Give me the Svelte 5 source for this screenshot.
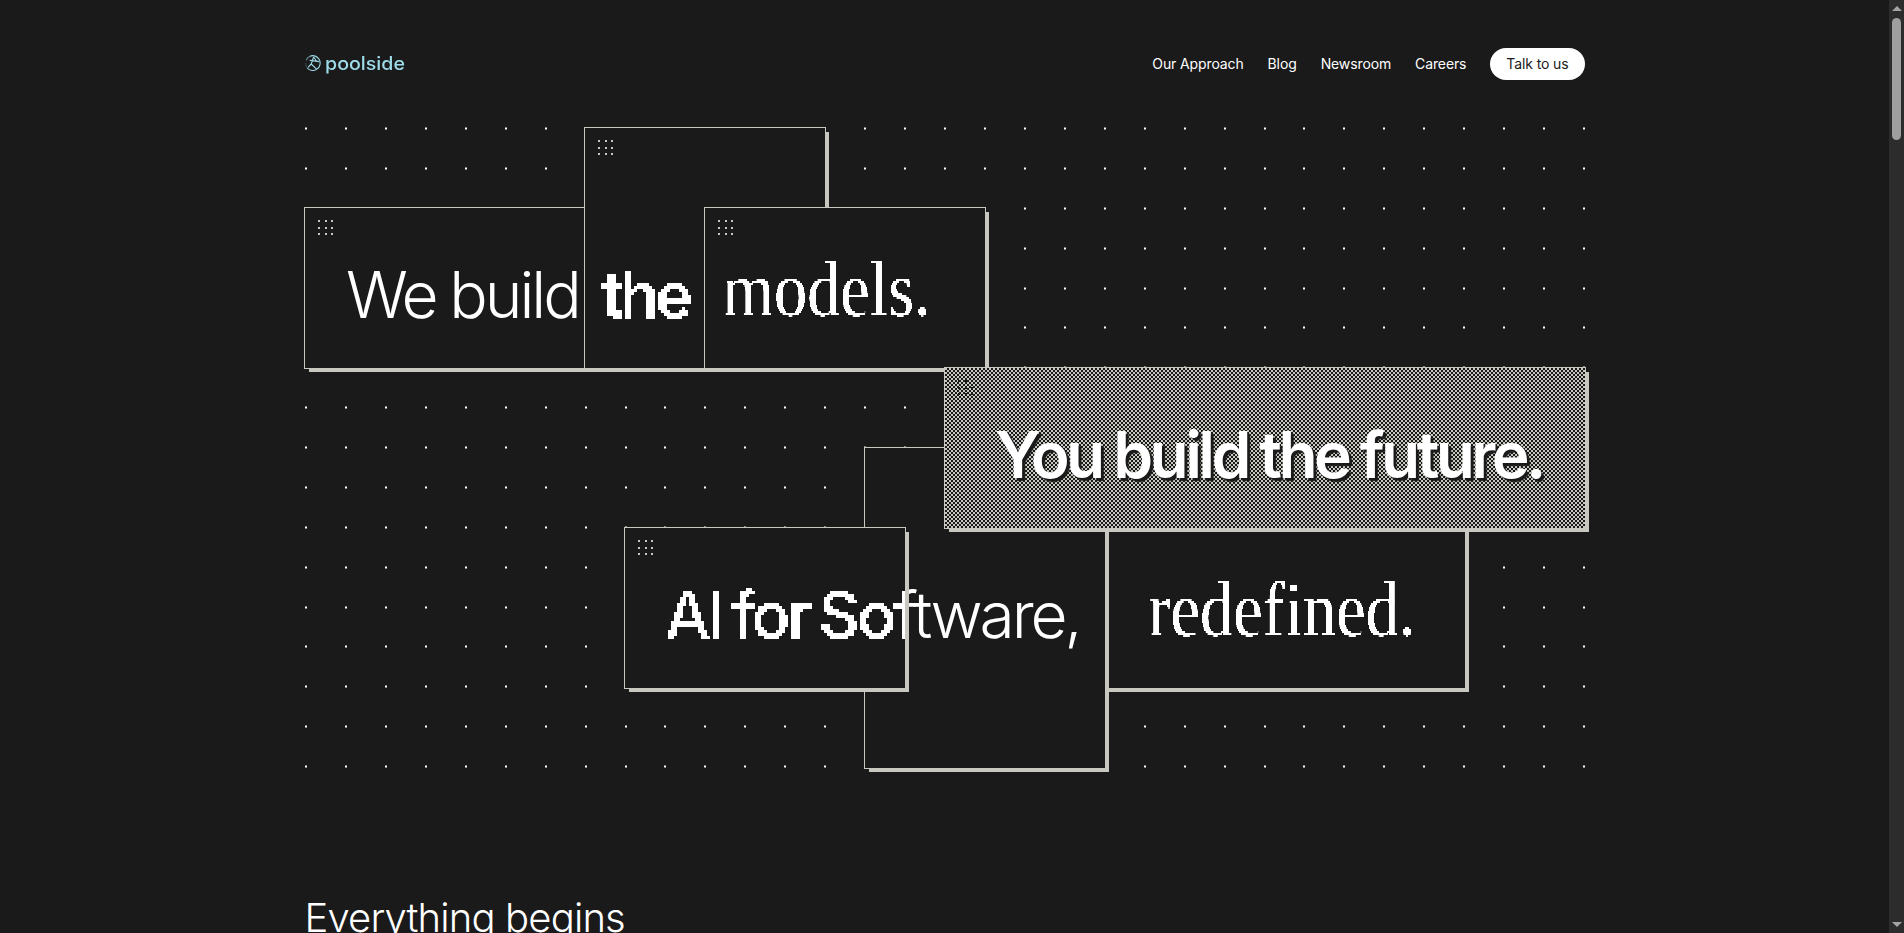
<script>
  const navLinks = ['Our Approach', 'Blog', 'Newsroom', 'Careers'];
  const dots = Array.from({ length: 33 * 17 });
  const grip = Array.from({ length: 9 });
</script>

{#snippet gripIcon()}
  <div class="grip">
    {#each grip as _}<i></i>{/each}
  </div>
{/snippet}

<svg class="defs" width="0" height="0" aria-hidden="true">
  <filter id="pixel3" x="0" y="0" width="100%" height="100%" color-interpolation-filters="sRGB">
    <feFlood x="1" y="1" width="1" height="1" flood-color="#fff" />
    <feComposite width="3" height="3" />
    <feTile result="grid" />
    <feComposite in="SourceGraphic" in2="grid" operator="in" />
    <feComponentTransfer>
      <feFuncA type="discrete" tableValues="0 1" />
    </feComponentTransfer>
    <feMorphology operator="dilate" radius="1" />
  </filter>
  <filter id="pixel2" x="0" y="0" width="100%" height="100%" color-interpolation-filters="sRGB">
    <feFlood x="0" y="0" width="1" height="1" flood-color="#fff" />
    <feComposite width="2" height="2" />
    <feTile result="grid" />
    <feComposite in="SourceGraphic" in2="grid" operator="in" />
    <feColorMatrix type="matrix" values="0 0 0 0 1  0 0 0 0 1  0 0 0 0 1  6 0 0 0 -2.2" result="s" />
    <feOffset in="s" dx="1" dy="0" result="r" />
    <feOffset in="s" dx="0" dy="1" result="d" />
    <feOffset in="s" dx="1" dy="1" result="rd" />
    <feMerge>
      <feMergeNode in="s" />
      <feMergeNode in="r" />
      <feMergeNode in="d" />
      <feMergeNode in="rd" />
    </feMerge>
  </filter>
</svg>

<div class="shell">
  <div class="page">
    <header class="topbar">
      <a class="logo" href="#top">
        <svg viewBox="0 0 16 16" width="16" height="16" fill="none" stroke="#9edbe8" stroke-width="1.1">
          <path d="M5 1.2A7.4 7.4 0 1 1 2.2 13" />
          <path d="M1.2 5.2 A7.4 7.4 0 0 1 5 1.2" stroke-opacity="0.6" />
          <path d="M2.2 13 A7.4 7.4 0 0 1 .8 8" stroke-opacity="0.25" />
          <path d="M4.6 5.2 14 6.6M8.6 2 6.2 9 11.6 14.2M6.2 9 3 12.4M8.6 2 11.4 6" />
        </svg>
        <span>poolside</span>
      </a>
      <nav>
        {#each navLinks as link}
          <a href="#top">{link}</a>
        {/each}
        <a class="cta" href="#top">Talk to us</a>
      </nav>
    </header>

    <section class="hero">
      <div class="dots">
        {#each dots as _}<i></i>{/each}
      </div>

      <div class="card a">
        {@render gripIcon()}
        <div class="line sans">We build</div>
      </div>
      <div class="card b tall">
        {@render gripIcon()}
        <div class="line mono the"><span class="px">the</span></div>
      </div>
      <div class="card c">
        {@render gripIcon()}
        <div class="line serif"><span class="px2">models.</span></div>
      </div>
      <div class="card f">
        <div class="line serif"><span class="px2">redefined.</span></div>
      </div>
      <div class="card e tall">
        <div class="line sans behind">AI for Software,</div>
      </div>
      <div class="card d">
        {@render gripIcon()}
        <div class="line mono ai"><span class="px">AI for Software,</span></div>
      </div>
      <div class="card future">
        <div class="grip dark">
          {#each grip as _}<i></i>{/each}
        </div>
        <div class="line strong">You build the future.</div>
      </div>
    </section>

    <h2>Everything begins</h2>
  </div>
</div>

<aside class="scrollbar">
  <span class="arrow up"></span>
  <span class="thumb"></span>
  <span class="arrow down"></span>
</aside>

<style>
  :global(html) {
    color-scheme: dark;
  }
  :global(body) {
    background: #1a1a1a;
    color: #fff;
    font-family: Inter, "Liberation Sans", sans-serif;
  }
  .defs {
    position: absolute;
  }
  .shell {
    margin-right: 15px;
  }
  .page {
    width: 1280px;
    margin: 0 auto;
    padding-bottom: 400px;
  }
  .topbar {
    display: flex;
    justify-content: space-between;
    align-items: center;
    padding-top: 48px;
    height: 32px;
    margin-bottom: 47px;
  }
  .logo {
    display: flex;
    align-items: center;
    gap: 4px;
    margin-top: -2px;
    color: #9edbe8;
    text-decoration: none;
    font-size: 18px;
    font-weight: 500;
  }
  .logo span {
    transform: scaleX(1.09);
    transform-origin: left;
  }
  nav {
    display: flex;
    align-items: center;
    gap: 24px;
  }
  nav a {
    padding-bottom: 1px;
    color: #fff;
    text-decoration: none;
    font-size: 14px;
    letter-spacing: -0.12px;
  }
  nav a.cta {
    display: flex;
    align-items: center;
    box-sizing: border-box;
    height: 32px;
    padding: 0 16px 1px;
    border-radius: 16px;
    background: #fff;
    color: #1a1a1a;
  }

  .hero {
    display: grid;
    grid-template-columns: repeat(32, 40px);
    grid-template-rows: repeat(16, 40px);
    margin: 0.5px 0 0 -0.5px;
  }
  .dots {
    grid-area: 1 / 1 / -1 / -1;
    display: grid;
    grid-template-columns: repeat(33, 2px);
    grid-template-rows: repeat(17, 2px);
    justify-content: space-between;
    align-content: space-between;
    transform: translate(1px, 0.5px);
  }
  .dots i {
    background: #fff;
  }

  .card {
    position: relative;
    margin: 0 -2px -2px 0;
    padding: 63px 0 0 41px;
    border: 1px solid #c8c8c0;
    background: #1a1a1a;
    box-shadow: 4px 4px 0 -1px #c8c8c0;
    overflow: hidden;
    box-sizing: border-box;
  }
  .card.tall {
    padding-top: 143px;
  }
  .a { grid-area: 3 / 1 / 7 / 9; }
  .b { grid-area: 1 / 8 / 7 / 14; padding-left: 16px; }
  .c { grid-area: 3 / 11 / 7 / 18; padding-left: 17px; }
  .f { grid-area: 11 / 21 / 15 / 30; padding-left: 43px; }
  .e { grid-area: 9 / 15 / 17 / 21; padding-left: 0; }
  .d { grid-area: 11 / 9 / 15 / 16; padding-left: 40px; }
  .future {
    grid-area: 7 / 17 / 11 / 33;
    padding-left: 50px;
    background: repeating-conic-gradient(#1a1a1a 0 25%, #c8c8c0 0 50%) 0 0 / 4px 4px;
  }

  .grip {
    position: absolute;
    top: 12px;
    left: 13px;
    display: grid;
    grid-template-columns: repeat(3, 2px);
    grid-auto-rows: 2px;
    gap: 4.5px;
  }
  .grip i {
    background: #c8c8c0;
  }
  .grip.dark i {
    background: #1a1a1a;
  }

  .line {
    font-size: 64px;
    line-height: 47px;
    white-space: nowrap;
  }
  .sans {
    font-weight: 300;
    letter-spacing: -3px;
    word-spacing: -1.5px;
  }
  .behind {
    margin-left: -197px;
    letter-spacing: -3.1px;
    word-spacing: 0;
  }
  .mono {
    font-weight: 600;
    letter-spacing: -3px;
    word-spacing: -6px;
  }
  .the {
    letter-spacing: -4px;
  }
  .ai {
    font-weight: 500;
    letter-spacing: -2.5px;
    word-spacing: -6px;
  }
  .px {
    display: inline-block;
    filter: url(#pixel3);
    padding-bottom: 20px;
  }
  .serif {
    font-family: "Liberation Serif", serif;
    font-size: 78px;
    margin-top: -6px;
    -webkit-text-stroke: 0.8px #1a1a1a;
  }
  .px2 {
    display: inline-block;
    transform: scaleX(0.85);
    transform-origin: left;
    filter: url(#pixel2);
  }
  .strong {
    font-weight: 600;
    letter-spacing: -3.6px;
    word-spacing: -1px;
    text-shadow: 3px 3px 1px #1a1a1a;
  }

  h2 {
    margin: 127px 0 0;
    font-size: 40px;
    font-weight: 300;
    line-height: 48px;
    letter-spacing: -0.85px;
  }

  .scrollbar {
    position: fixed;
    top: 0;
    right: 0;
    bottom: 0;
    width: 15px;
    display: flex;
    flex-direction: column;
    align-items: center;
    background: #2c2c2c;
  }
  .thumb {
    width: 9px;
    height: 122px;
    margin-top: 7px;
    border-radius: 5px;
    background: #9f9f9f;
  }
  .arrow {
    width: 0;
    height: 0;
    border-left: 5px solid transparent;
    border-right: 5px solid transparent;
  }
  .arrow.up {
    margin-top: 6px;
    border-bottom: 5px solid #a3a3a3;
  }
  .arrow.down {
    margin-top: auto;
    margin-bottom: 6px;
    border-top: 5px solid #a3a3a3;
  }
</style>
